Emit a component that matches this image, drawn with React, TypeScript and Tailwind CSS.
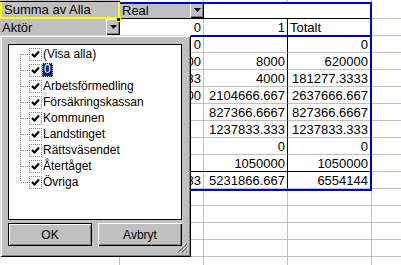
import React from "react";

const items = [
  "(Visa alla)",
  "0",
  "Arbetsförmedling",
  "Försäkringskassan",
  "Kommunen",
  "Landstinget",
  "Rättsväsendet",
  "Återtåget",
  "Övriga",
];

// kolumn B, C, Totalt
const dataRows: string[][] = [
  ["0", "", "0"],
  ["612000", "8000", "620000"],
  ["177277.3333", "4000", "181277.3333"],
  ["533000", "2104666.667", "2637666.667"],
  ["", "827366.6667", "827366.6667"],
  ["", "1237833.333", "1237833.333"],
  ["", "0", "0"],
  ["", "1050000", "1050000"],
  ["1322277.333", "5231866.667", "6554144"],
];

const DropButton = () => (
  <div className="w-[14px] h-full bg-[#c0c0c0] flex items-center justify-center shadow-[inset_1px_1px_0_#fff,inset_-1px_-1px_0_#000,inset_-2px_-2px_0_#808080]">
    <svg width="7" height="4" viewBox="0 0 7 4">
      <path d="M0 0h7L3.5 4z" fill="#000" />
    </svg>
  </div>
);

const Check = () => (
  <svg width="11" height="11" viewBox="0 0 11 11">
    <polyline points="2,5 4.5,7.5 9,2.5" fill="none" stroke="#000" strokeWidth="2.2" />
  </svg>
);

const TreeLine = ({ first, last }: { first: boolean; last: boolean }) => (
  <svg width="20" height="16" viewBox="0 0 20 16" className="shrink-0">
    <line x1="11.5" y1={first ? 8 : 0} x2="11.5" y2={last ? 8 : 16} stroke="#808080" strokeDasharray="1 1" />
    <line x1="12" y1="8.5" x2="20" y2="8.5" stroke="#808080" strokeDasharray="1 1" />
  </svg>
);

const FilterPopup = () => (
  <div className="absolute left-0 top-[35px] w-[191px] h-[222px] bg-[#c0c0c0] pl-[8px] pt-[9px] shadow-[inset_1px_1px_0_#dfdfdf,inset_-1px_-1px_0_#000,inset_2px_2px_0_#fff,inset_-2px_-2px_0_#808080] font-['Liberation_Sans',Arial,sans-serif] text-[12px] text-black">
    <div className="w-[174px] h-[176px] bg-white border border-black pt-[1px]">
      {items.map((name, i) => (
        <div key={name} className="flex items-center h-[16px]">
          <TreeLine first={i === 0} last={i === items.length - 1} />
          <div className="w-[13px] h-[13px] border border-dotted border-[#808080] flex items-center justify-center shrink-0">
            <Check />
          </div>
          <span
            className={
              i === 1
                ? "px-[2px] h-[14px] leading-[13px] bg-[#0a246a] text-white outline outline-1 outline-dotted outline-[#c0c0c0] -outline-offset-1"
                : "ml-[1px] leading-[14px]"
            }
          >
            {name}
          </span>
        </div>
      ))}
    </div>
    <div className="flex gap-[6px] mt-[3px]">
      <button className="w-[84px] h-[23px] bg-[#c0c0c0] border border-black shadow-[inset_1px_1px_0_#fff,inset_-1px_-1px_0_#808080] flex items-center justify-center">
        OK
      </button>
      <button className="w-[84px] h-[23px] bg-[#c0c0c0] shadow-[inset_1px_1px_0_#fff,inset_-1px_-1px_0_#000,inset_-2px_-2px_0_#808080] flex items-center justify-center">
        Avbryt
      </button>
    </div>
    <svg width="12" height="12" viewBox="0 0 12 12" className="absolute right-[3px] bottom-[3px]">
      <path d="M11 1L1 11M11 5L5 11M11 9L9 11" stroke="#808080" strokeWidth="1" />
      <path d="M11 2L2 11M11 6L6 11M11 10L10 11" stroke="#808080" strokeWidth="1" />
      <path d="M10 1L0 11M10 5L4 11M10 9L8 11" stroke="#fff" strokeWidth="1" />
    </svg>
  </div>
);

export default function App() {
  const grid = "border-r border-b border-[#c0c0c0]";
  const emptyRows = [0, 1, 2, 3, 4];

  return (
    <div className="relative w-[401px] h-[265px] overflow-hidden bg-white font-['Liberation_Sans',Arial,sans-serif] text-[13px] text-black leading-none">
      {/* remsa av raden ovanför */}
      <div className="flex h-[2px]">
        <div className="w-[120px] bg-[#c0c0c0] border-b border-black" />
        <div className="w-[84px] border-r border-[#c0c0c0]" />
        <div className="w-[84px] border-r border-[#c0c0c0]" />
        <div className="w-[84px] border-r border-[#c0c0c0]" />
        <div className="flex-1" />
      </div>

      {/* rad 1: datafält + kolumnfält */}
      <div className="flex h-[17px]">
        <div className="w-[120px] bg-[#c0c0c0] border-x-2 border-b-2 border-[#ffff00] flex items-center pl-[2px]">
          Summa av Alla
        </div>
        <div className="w-[84px] bg-[#c0c0c0] border-b border-black flex items-center justify-between pl-[2px]">
          <span>Real</span>
          <DropButton />
        </div>
        <div className="w-[84px] border-b border-black" />
        <div className="w-[84px] border-b border-black" />
        <div className="flex-1 border-b border-[#c0c0c0]" />
      </div>

      {/* rad 2: radfält + kolumnrubriker */}
      <div className="flex h-[17px]">
        <div className="w-[120px] bg-[#c0c0c0] border-b border-[#808080] flex items-center justify-between pl-[2px]">
          <span>Aktör</span>
          <DropButton />
        </div>
        <div className={`w-[84px] ${grid} flex items-center justify-end pr-[2px]`}>0</div>
        <div className="w-[84px] border-r border-b border-black flex items-center justify-end pr-[2px]">1</div>
        <div className={`w-[84px] ${grid} flex items-center pl-[2px]`}>Totalt</div>
        <div className="flex-1 border-b border-[#c0c0c0]" />
      </div>

      {/* datarader */}
      {dataRows.map((r, i) => {
        const beforeTotal = i === dataRows.length - 2;
        const bottom = beforeTotal ? "border-b-black" : "border-b-[#c0c0c0]";
        return (
          <div key={i} className="flex h-[17px]">
            <div className={`w-[120px] ${grid}`} />
            <div className={`w-[84px] border-r border-b border-r-[#c0c0c0] ${bottom} flex items-center justify-end pr-[2px]`}>
              {r[0]}
            </div>
            <div className={`w-[84px] border-r border-b border-r-black ${bottom} flex items-center justify-end pr-[2px]`}>
              {r[1]}
            </div>
            <div className={`w-[84px] border-r border-b border-r-[#c0c0c0] ${bottom} flex items-center justify-end pr-[3px]`}>
              {r[2]}
            </div>
            <div className="flex-1 border-b border-[#c0c0c0]" />
          </div>
        );
      })}

      {/* tomma rader */}
      {emptyRows.map((i) => (
        <div key={i} className="flex h-[17px]">
          <div className={`w-[120px] ${grid}`} />
          <div className={`w-[84px] ${grid}`} />
          <div className={`w-[84px] ${grid}`} />
          <div className={`w-[84px] ${grid}`} />
          <div className="flex-1 border-b border-[#c0c0c0]" />
        </div>
      ))}

      {/* pivottabellens markering */}
      <div className="absolute left-[120px] top-[2px] w-[252px] h-[189px] border-2 border-l-0 border-[#0000cc] pointer-events-none" />
      <div className="absolute left-[120px] top-[35px] w-[252px] h-[2px] bg-[#0000cc]" />
      <div className="absolute left-[116px] top-[17px] w-[5px] h-[5px] bg-black border border-[#ffff00]" />

      <FilterPopup />
    </div>
  );
}
